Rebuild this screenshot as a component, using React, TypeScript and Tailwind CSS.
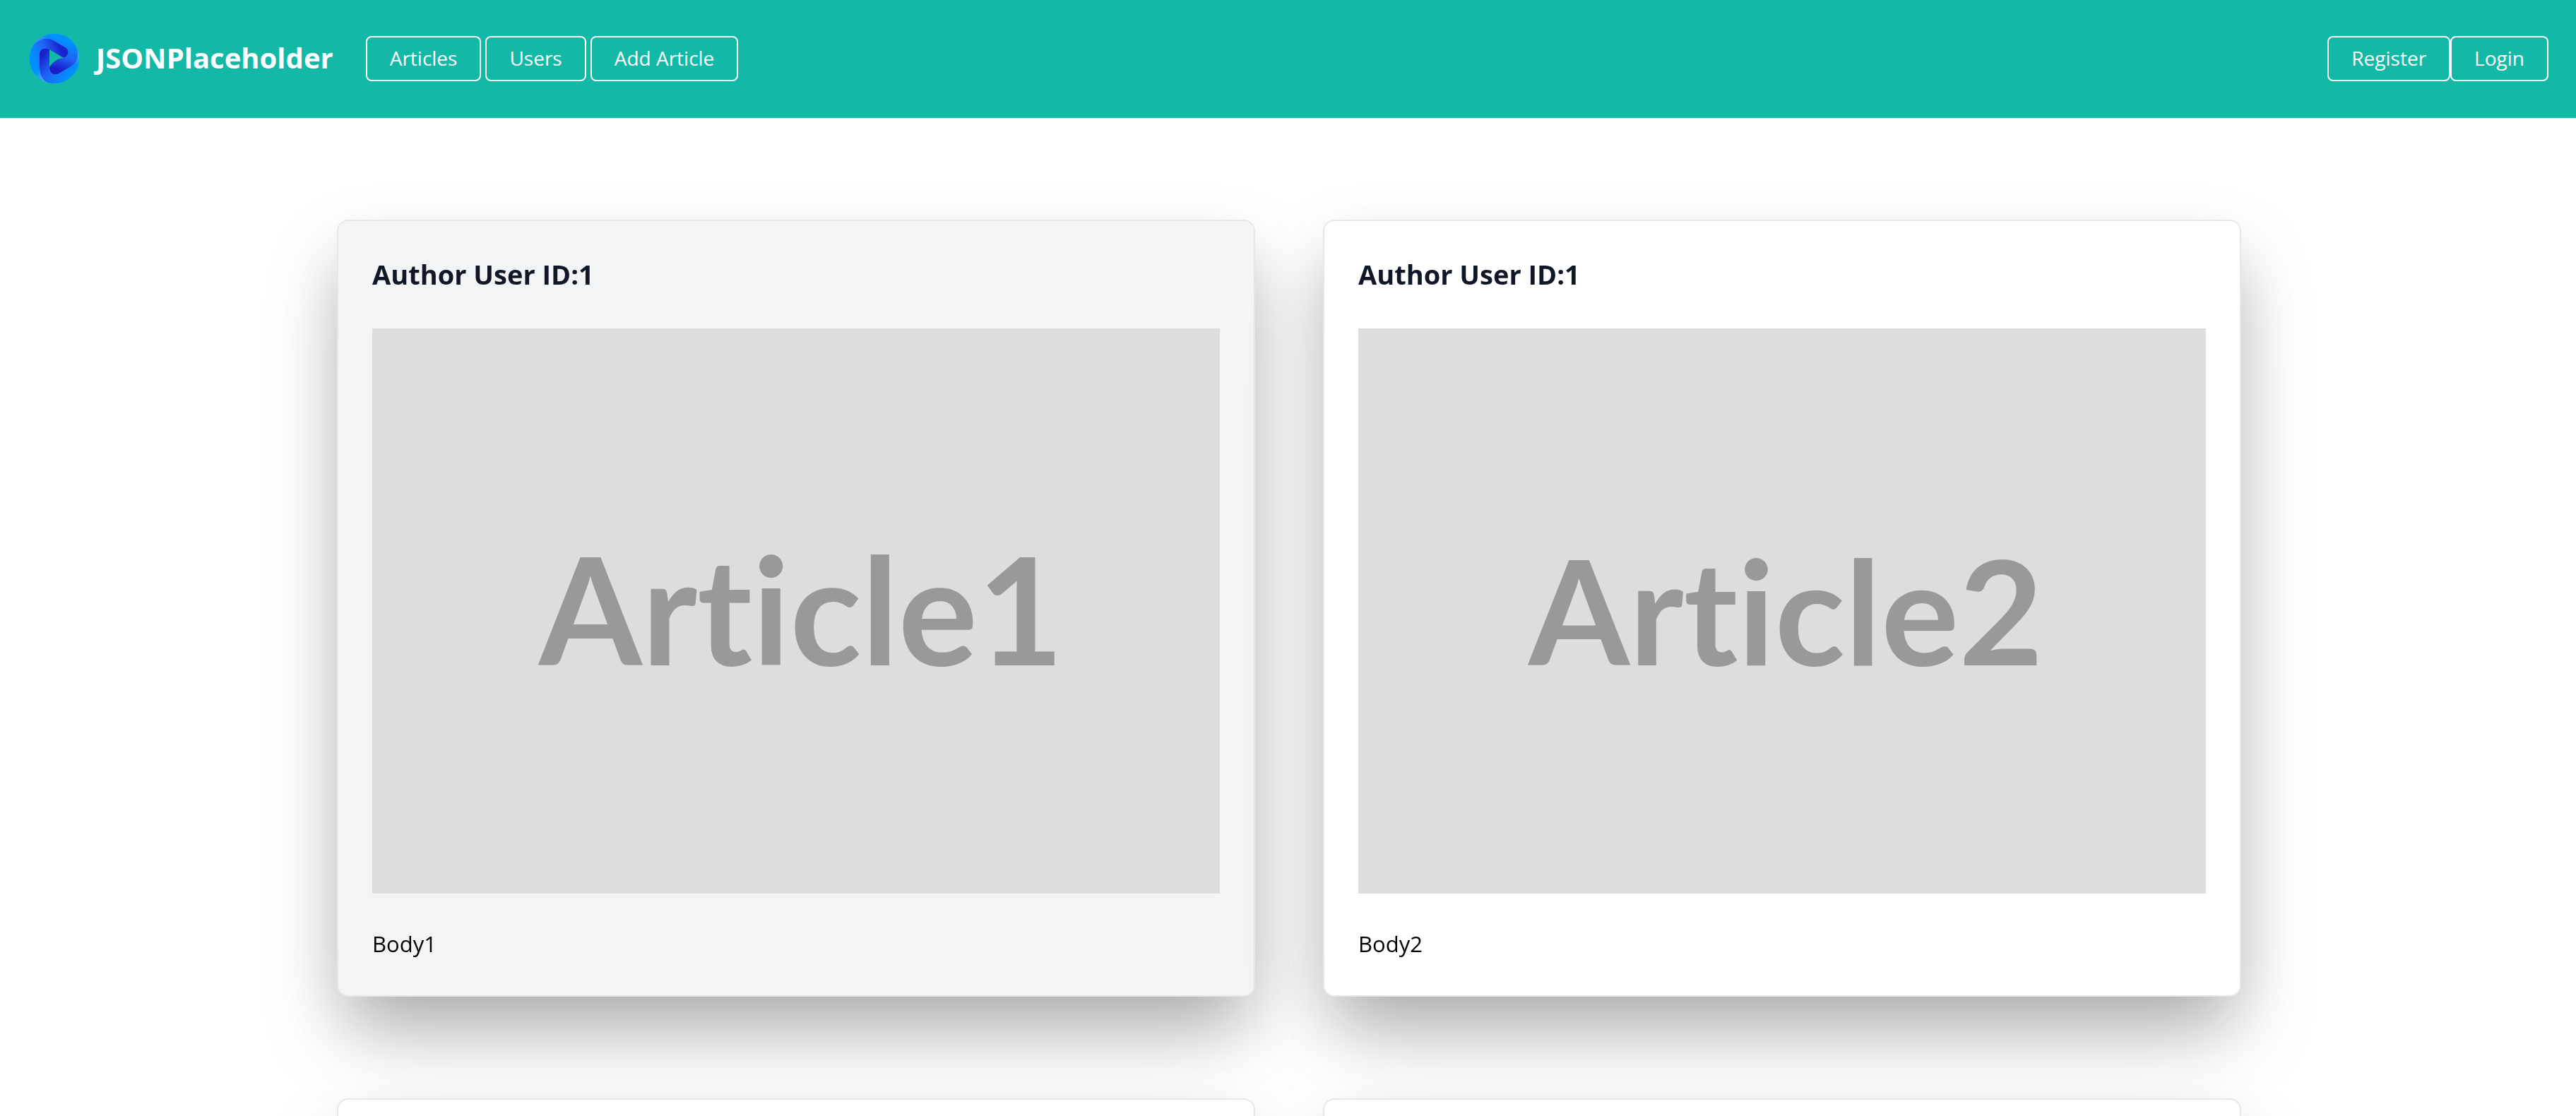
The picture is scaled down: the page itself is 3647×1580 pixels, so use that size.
import type { ReactNode } from "react";

type Article = { id: number; userId: number; active?: boolean; titleSize: number; titleX: number };

const articles: Article[] = [
  { id: 1, userId: 1, active: true, titleSize: 210, titleX: 236 },
  { id: 2, userId: 1, titleSize: 206, titleX: 241 },
  { id: 3, userId: 1, titleSize: 206, titleX: 241 },
  { id: 4, userId: 1, titleSize: 206, titleX: 241 },
];

function Logo() {
  const top =
    "M18 45 A105 105 0 0 1 201 62 C210 100 200 125 178 137 L124 168 C102 180 84 166 84 145 L84 140 C100 122 108 107 143 101 L150 98 C168 88 168 67 150 57 L100 28 C75 16 45 22 18 45Z";
  const bottom =
    "M42 85 C42 62 65 56 84 66 L84 145 C84 166 102 180 124 168 L178 137 C200 125 210 100 201 62 A105 105 0 0 1 72 205 C48 190 42 165 42 130Z";
  const left =
    "M18 45 C45 20 75 14 100 28 L150 57 C168 67 168 88 150 98 L143 101 L84 66 C65 56 42 62 42 85 L42 130 C42 165 48 190 72 205 A105 105 0 0 1 18 45Z";
  return (
    <svg viewBox="0 0 210 210" className="size-[70px]" aria-hidden="true">
      <defs>
        <linearGradient id="topBand" gradientUnits="userSpaceOnUse" x1="150" y1="10" x2="105" y2="150">
          <stop offset="0.1" stopColor="#0092ff" />
          <stop offset="0.6" stopColor="#1f62f5" />
          <stop offset="0.95" stopColor="#1a1fca" />
        </linearGradient>
        <linearGradient id="bottomBand" gradientUnits="userSpaceOnUse" x1="55" y1="85" x2="170" y2="180">
          <stop offset="0" stopColor="#1a1fca" />
          <stop offset="0.45" stopColor="#1f62f5" />
          <stop offset="1" stopColor="#0092ff" />
        </linearGradient>
        <linearGradient id="leftBand" gradientUnits="userSpaceOnUse" x1="15" y1="120" x2="155" y2="75">
          <stop offset="0" stopColor="#0092ff" />
          <stop offset="0.45" stopColor="#1f62f5" />
          <stop offset="0.9" stopColor="#1a1fca" />
        </linearGradient>
        <radialGradient id="topGlow" gradientUnits="userSpaceOnUse" cx="22" cy="40" r="60">
          <stop offset="0" stopColor="#4aa8ff" />
          <stop offset="1" stopColor="#4aa8ff" stopOpacity="0" />
        </radialGradient>
        <radialGradient id="rightGlow" gradientUnits="userSpaceOnUse" cx="207" cy="85" r="50">
          <stop offset="0" stopColor="#4aa8ff" />
          <stop offset="1" stopColor="#4aa8ff" stopOpacity="0" />
        </radialGradient>
        <radialGradient id="leftGlow" gradientUnits="userSpaceOnUse" cx="58" cy="198" r="50">
          <stop offset="0" stopColor="#4aa8ff" />
          <stop offset="1" stopColor="#4aa8ff" stopOpacity="0" />
        </radialGradient>
      </defs>
      <path d={top} fill="url(#topBand)" />
      <path d={top} fill="url(#topGlow)" />
      <path d={bottom} fill="url(#bottomBand)" />
      <path d={bottom} fill="url(#rightGlow)" />
      <path d={left} fill="url(#leftBand)" />
      <path d={left} fill="url(#leftGlow)" />
    </svg>
  );
}

function NavButton({ children }: { children: ReactNode }) {
  return (
    <button
      type="button"
      className="rounded-lg border-2 border-white px-8 pt-[15px] pb-[17px] text-[28px] leading-7 text-white hover:bg-white hover:text-teal-500"
    >
      {children}
    </button>
  );
}

function ArticleCard({ article }: { article: Article }) {
  const title = `Article${article.id}`;
  return (
    <article
      className={`rounded-2xl border-2 border-gray-200 p-12 shadow-[0_50px_100px_-24px_rgb(0_0_0/0.25)] drop-shadow-[0_50px_50px_rgb(0_0_0/0.15)] ${
        article.active ? "bg-gray-100" : "bg-white"
      }`}
    >
      <h5 className="mb-[50px] text-[38px] leading-[54px] font-bold text-gray-900">
        Author User ID:{article.userId}
      </h5>
      <svg viewBox="0 0 1200 800" className="w-full bg-[#dddddd]" role="img" aria-label={title}>
        <text
          x={article.titleX}
          y="477"
          fontSize={article.titleSize}
          className="fill-[#999999] font-['Lato',sans-serif] font-bold [font-variant-ligatures:none]"
        >
          {title}
        </text>
      </svg>
      <p className="mt-[46px] text-[31px] leading-[50px] text-black">Body{article.id}</p>
    </article>
  );
}

export default function App() {
  return (
    <div className="h-screen overflow-x-hidden overflow-y-auto bg-white font-['Open_Sans','Noto_Sans',sans-serif] [scrollbar-width:none]">
      <header className="flex items-center justify-between bg-[#14b8a6] pt-12 pr-[39px] pb-[49px] pl-[42px]">
        <div className="flex items-center gap-[46px]">
          <a href="#" className="flex items-center gap-6 text-[40px] leading-[56px] font-bold text-white">
            <Logo />
            <span className="pb-0.5">JSONPlaceholder</span>
          </a>
          <nav className="flex items-center gap-1.5">
            <NavButton>Articles</NavButton>
            <NavButton>Users</NavButton>
            <NavButton>Add Article</NavButton>
          </nav>
        </div>
        <div className="flex items-center">
          <NavButton>Register</NavButton>
          <NavButton>Login</NavButton>
        </div>
      </header>
      <main className="pt-36 pl-[3px]">
        <div className="mx-auto grid max-w-[2696px] grid-cols-2 gap-x-24 gap-y-36">
          {articles.map((article) => (
            <ArticleCard key={article.id} article={article} />
          ))}
        </div>
      </main>
    </div>
  );
}
